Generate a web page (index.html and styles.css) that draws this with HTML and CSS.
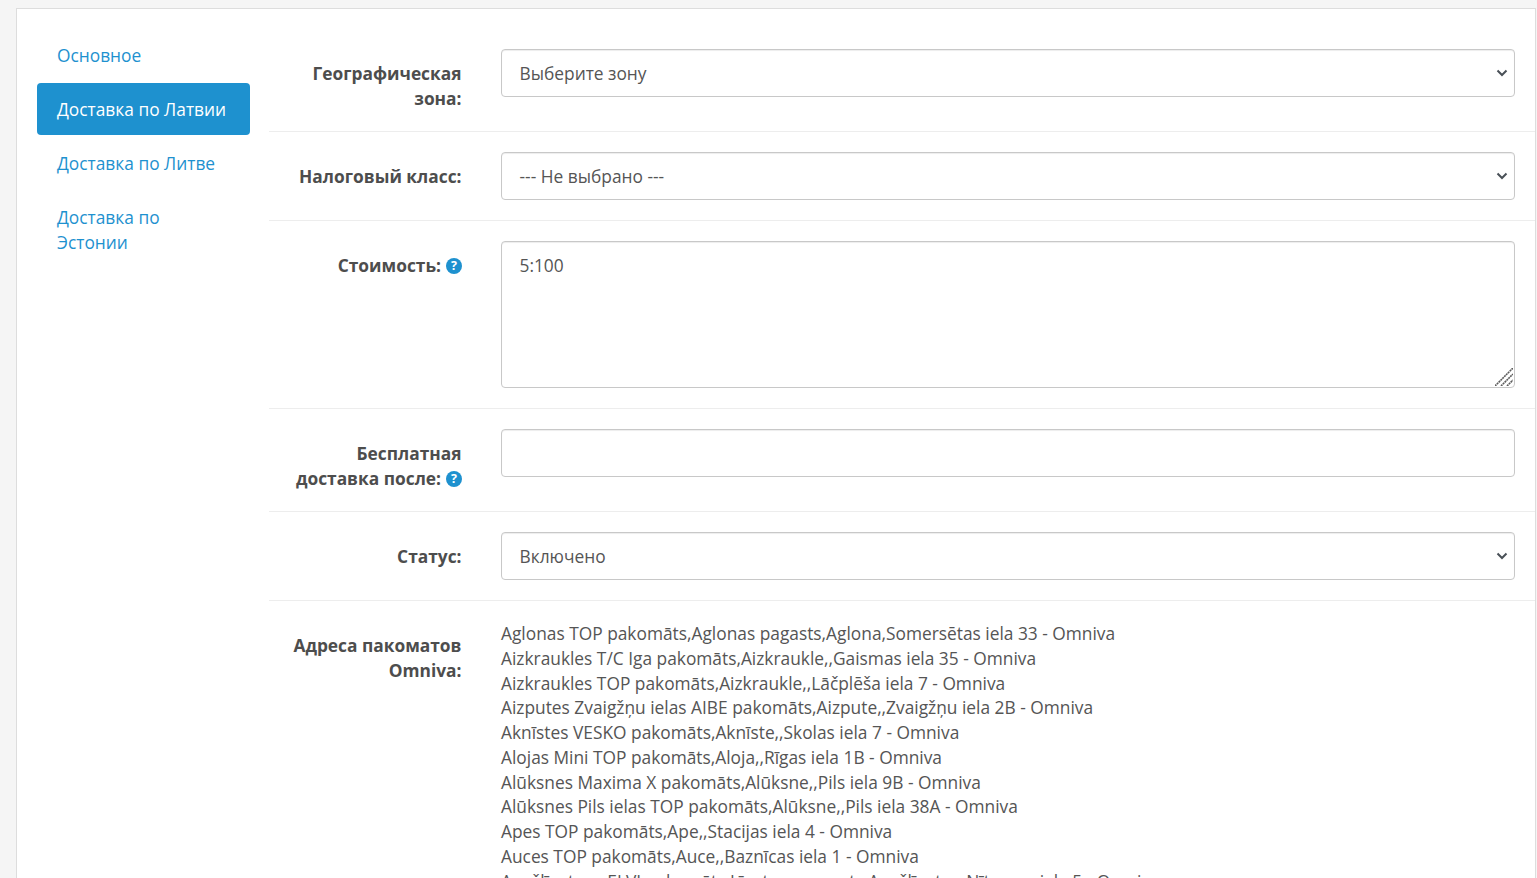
FILE: index.html
```html
<!DOCTYPE html>
<html lang="ru">
<head>
<meta charset="utf-8">
<title>Доставка</title>
<link rel="stylesheet" href="styles.css">
</head>
<body>
<div class="panel">
  <nav class="tabs">
    <a class="tab" href="#">Основное</a>
    <a class="tab active" href="#">Доставка по Латвии</a>
    <a class="tab" href="#">Доставка по Литве</a>
    <a class="tab" href="#">Доставка по Эстонии</a>
  </nav>
  <form class="form">
    <div class="row">
      <label class="label">Географическая зона:</label>
      <div class="field">
        <div class="control select">Выберите зону<svg class="chev" viewBox="0 0 12 8"><path d="M1.5 1.5 6 6l4.5-4.5" fill="none" stroke="#495057" stroke-width="2"/></svg></div>
      </div>
    </div>
    <div class="row">
      <label class="label">Налоговый класс:</label>
      <div class="field">
        <div class="control select">--- Не выбрано ---<svg class="chev" viewBox="0 0 12 8"><path d="M1.5 1.5 6 6l4.5-4.5" fill="none" stroke="#495057" stroke-width="2"/></svg></div>
      </div>
    </div>
    <div class="row">
      <label class="label">Стоимость: <svg class="help" viewBox="0 0 16 16"><circle cx="8" cy="8" r="8" fill="#1e91cf"/><text x="8" y="12.4" class="help-mark">?</text></svg></label>
      <div class="field">
        <div class="control area">5:100<svg class="grip" viewBox="0 0 18 18"><path d="M0 18 18 0M6 18 18 6M12 18l6-6" stroke="#5c5c5c" stroke-width="1.6" fill="none" stroke-dasharray="2 .6"/></svg></div>
      </div>
    </div>
    <div class="row">
      <label class="label">Бесплатная доставка после: <svg class="help" viewBox="0 0 16 16"><circle cx="8" cy="8" r="8" fill="#1e91cf"/><text x="8" y="12.4" class="help-mark">?</text></svg></label>
      <div class="field">
        <div class="control"></div>
      </div>
    </div>
    <div class="row">
      <label class="label">Статус:</label>
      <div class="field">
        <div class="control select">Включено<svg class="chev" viewBox="0 0 12 8"><path d="M1.5 1.5 6 6l4.5-4.5" fill="none" stroke="#495057" stroke-width="2"/></svg></div>
      </div>
    </div>
    <div class="row last">
      <label class="label">Адреса пакоматов Omniva:</label>
      <div class="field list">
        Aglonas TOP pakomāts,Aglonas pagasts,Aglona,Somersētas iela 33 - Omniva<br>
        Aizkraukles T/C Iga pakomāts,Aizkraukle,,Gaismas iela 35 - Omniva<br>
        Aizkraukles TOP pakomāts,Aizkraukle,,Lāčplēša iela 7 - Omniva<br>
        Aizputes Zvaigžņu ielas AIBE pakomāts,Aizpute,,Zvaigžņu iela 2B - Omniva<br>
        Aknīstes VESKO pakomāts,Aknīste,,Skolas iela 7 - Omniva<br>
        Alojas Mini TOP pakomāts,Aloja,,Rīgas iela 1B - Omniva<br>
        Alūksnes Maxima X pakomāts,Alūksne,,Pils iela 9B - Omniva<br>
        Alūksnes Pils ielas TOP pakomāts,Alūksne,,Pils iela 38A - Omniva<br>
        Apes TOP pakomāts,Ape,,Stacijas iela 4 - Omniva<br>
        Auces TOP pakomāts,Auce,,Baznīcas iela 1 - Omniva<br>
        Augšlīgatnes ELVI pakomāts,Līgatnes pagasts,Augšlīgatne,Nītaures iela 5 - Omniva
      </div>
    </div>
  </form>
</div>
</body>
</html>
```
FILE: styles.css
```css
html, body {
  margin: 0;
  height: 878px;
  overflow: hidden;
}
body {
  background: #f5f5f5;
  padding: 0 1px 0 16px;
  box-sizing: border-box;
  font-family: "Open Sans", sans-serif;
  font-size: 17.33px;
  line-height: 24.76px;
  color: #555;
}
.panel {
  display: flex;
  background: #fff;
  border-left: 1px solid #ddd;
  border-right: 1px solid #ddd;
  border-top: 1px solid #ddd;
  margin-top: 8px;
  height: 870px;
  overflow: hidden;
  box-sizing: border-box;
  padding: 20px 0 0 20px;
}
.tabs {
  width: 213px;
  flex: none;
  margin-right: 19px;
}
.tab {
  display: block;
  padding: 13.5px 20px;
  margin-bottom: 2px;
  color: #1e91cf;
  text-decoration: none;
  border-radius: 4px;
  line-height: 25px;
}
.tab.active {
  background: #1e91cf;
  color: #fff;
}
.form {
  flex: 1;
  min-width: 0;
}
.row {
  display: flex;
  padding: 20px 0;
  border-bottom: 1px solid #ededed;
}
.row.last {
  border-bottom: 0;
}
.label {
  box-sizing: border-box;
  width: 192.5px;
  flex: none;
  text-align: right;
  font-weight: 700;
  line-height: 25px;
  padding: 12px 0 0 10px;
  margin-right: 39.5px;
  color: #4d4d4d;
}
.help {
  width: 16px;
  height: 16px;
  vertical-align: -2px;
}
.help-mark {
  font: 700 12.5px "Open Sans", sans-serif;
  fill: #fff;
  text-anchor: middle;
}
.field {
  flex: 1;
  padding-right: 20px;
  min-width: 0;
}
.control {
  position: relative;
  height: 48px;
  box-sizing: border-box;
  border: 1px solid #c8c8c8;
  border-radius: 4px;
  padding: 11px 18px 11px 17.5px;
  background: #fff;
  box-shadow: inset 0 1px 1px rgba(0,0,0,.075);
}
.area {
  height: 147px;
}
.chev {
  position: absolute;
  right: 6px;
  top: 19px;
  width: 12px;
  height: 8px;
}
.grip {
  position: absolute;
  right: 1px;
  bottom: 1px;
  width: 18px;
  height: 18px;
}
.list {
  white-space: nowrap;
}
```
